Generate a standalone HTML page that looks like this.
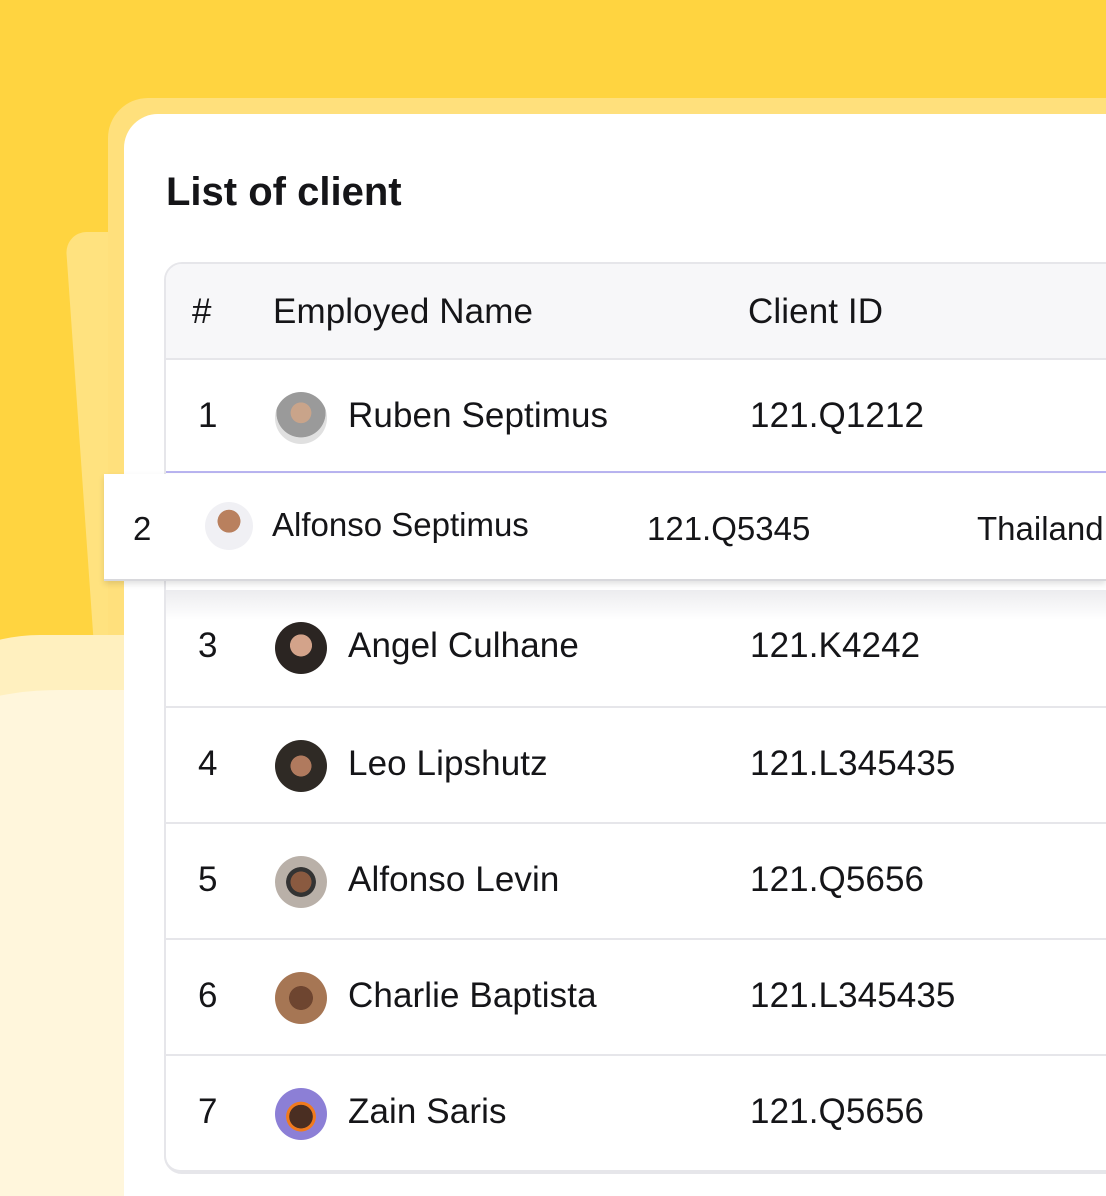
<!DOCTYPE html>
<html style="width:1106px;height:1196px;overflow:hidden"><head><meta charset="utf-8"><style>
*{margin:0;padding:0;box-sizing:border-box}
body{width:1106px;height:1196px;overflow:hidden;background:#ffd440;position:relative;font-family:"Liberation Sans",sans-serif;color:#151518}
#w{position:absolute;left:0;top:0;width:1106px;height:1196px;overflow:hidden}
.abs{position:absolute}
.row{position:absolute;left:164px;width:980px;height:116px;border-top:2px solid #e6e6ea;background:#fff}
.row span{position:absolute;font-size:35px;letter-spacing:0.1px;top:36px}
.n{left:32px}.nm{left:182px}.id{left:584px}
.av{position:absolute;left:109px;top:32px;width:52px;height:52px;border-radius:50%}
</style></head><body><div id="w">
<div class="abs" style="left:65px;top:232px;width:120px;height:900px;background:#ffe27f;border-radius:22px;transform:skewX(4deg);transform-origin:top left"></div>
<div class="abs" style="left:108px;top:98px;width:1100px;height:1200px;background:#ffe07c;border-radius:40px"></div>
<div class="abs" style="left:-60px;top:635px;width:200px;height:700px;background:#fff0bf;border-radius:50% 0 0 0/8% 0 0 0"></div>
<div class="abs" style="left:-60px;top:690px;width:200px;height:700px;background:#fff6dc;border-radius:60% 0 0 0/6% 0 0 0"></div>
<div class="abs" style="left:124px;top:114px;width:1100px;height:1200px;background:#fff;border-radius:34px"></div>
<div class="abs" style="left:166px;top:170px;font-size:40px;font-weight:bold;letter-spacing:0px">List of client</div>
<div class="abs" style="left:164px;top:262px;width:980px;height:912px;border:2px solid #e6e6ea;border-radius:18px;overflow:hidden;background:#fff"></div>
<div class="abs" style="left:166px;top:264px;width:980px;height:96px;background:#f7f7f9;border-radius:16px 0 0 0"></div>
<div class="abs" style="left:192px;top:292px;font-size:35px;letter-spacing:0.1px">#</div>
<div class="abs" style="left:273px;top:292px;font-size:35px;letter-spacing:0.1px">Employed Name</div>
<div class="abs" style="left:748px;top:292px;font-size:35px;letter-spacing:0.1px">Client ID</div>
<div class="row" style="top:358px;border-left:2px solid #e6e6ea"><span class="n">1</span><div class="av" style="background:radial-gradient(circle at 50% 40%,#c9a48a 0 25%,#9a9a9a 26% 60%,#e0e0e0 61%)"></div><span class="nm">Ruben Septimus</span><span class="id">121.Q1212</span></div>
<div class="row" style="top:590px;border-left:2px solid #e6e6ea;background:linear-gradient(#ececef,#fff 30px);border-top:none"><span class="n">3</span><div class="av" style="background:radial-gradient(circle at 50% 45%,#d3a38a 0 28%,#2b2522 29%)"></div><span class="nm">Angel Culhane</span><span class="id">121.K4242</span></div>
<div class="row" style="top:706px;border-left:2px solid #e6e6ea"><span class="n">4</span><div class="av" style="background:radial-gradient(circle at 50% 50%,#b07a5e 0 28%,#2f2a25 29%)"></div><span class="nm">Leo Lipshutz</span><span class="id">121.L345435</span></div>
<div class="row" style="top:822px;border-left:2px solid #e6e6ea"><span class="n">5</span><div class="av" style="background:radial-gradient(circle at 50% 50%,#8a5a40 0 28%,#333 29% 40%,#b9b0a8 41%)"></div><span class="nm">Alfonso Levin</span><span class="id">121.Q5656</span></div>
<div class="row" style="top:938px;border-left:2px solid #e6e6ea"><span class="n">6</span><div class="av" style="background:radial-gradient(circle at 50% 50%,#6e4530 0 32%,#a67654 33%)"></div><span class="nm">Charlie Baptista</span><span class="id">121.L345435</span></div>
<div class="row" style="top:1054px;border-left:2px solid #e6e6ea;height:118px;border-radius:0 0 0 16px;border-bottom:2px solid #e6e6ea"><span class="n">7</span><div class="av" style="background:radial-gradient(circle at 50% 55%,#4a2e22 0 30%,#f07a1e 31% 38%,#8c7fd6 39%)"></div><span class="nm">Zain Saris</span><span class="id">121.Q5656</span></div>
<div class="abs" style="left:166px;top:471px;width:940px;height:2px;background:#b9b4f0"></div>
<div class="abs" style="left:104px;top:474px;width:1002px;height:107px;background:#fff;box-shadow:0 3px 6px rgba(0,0,0,.12);border-bottom:2px solid #d8d8dc">
<span class="abs" style="left:29px;top:36px;font-size:33px">2</span>
<div class="abs" style="left:101px;top:28px;width:48px;height:48px;border-radius:50%;background:radial-gradient(circle at 50% 40%,#b9805e 0 30%,#f0f0f4 31%)"></div>
<span class="abs" style="left:168px;top:32px;font-size:33px;letter-spacing:0px">Alfonso Septimus</span>
<span class="abs" style="left:543px;top:36px;font-size:33px;letter-spacing:0px">121.Q5345</span>
<span class="abs" style="left:873px;top:36px;font-size:33px;letter-spacing:0px">Thailand</span>
</div>
</div></body></html>
